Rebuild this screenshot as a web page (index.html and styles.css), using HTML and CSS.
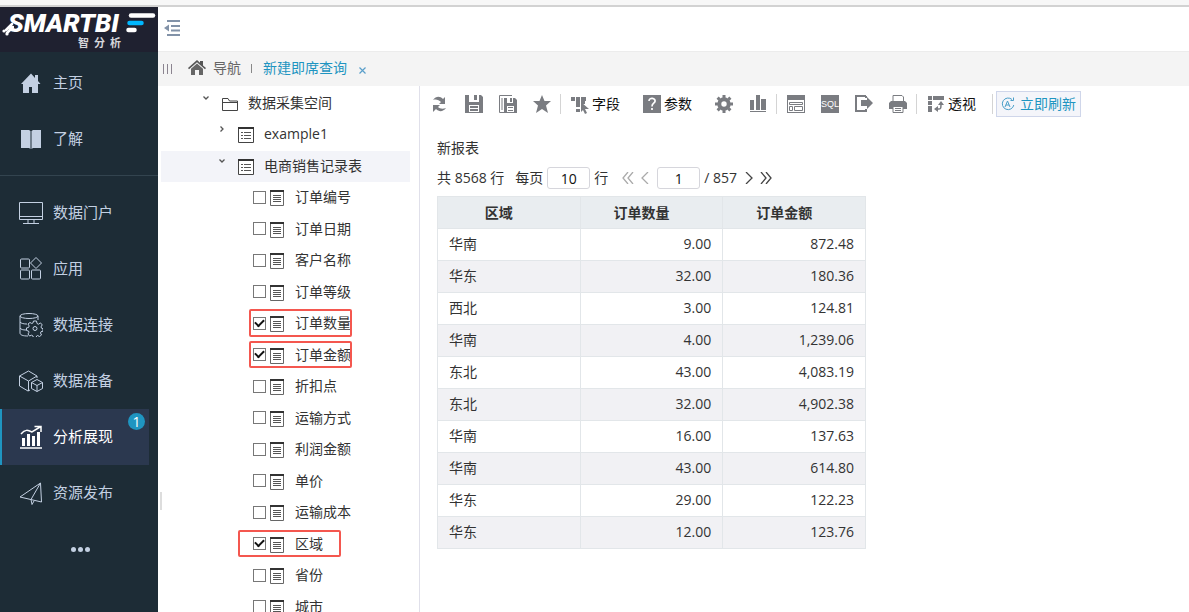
FILE: index.html
```
<!DOCTYPE html>
<html lang="zh-CN">
<head>
<meta charset="utf-8">
<title>新建即席查询</title>
<link rel="stylesheet" href="styles.css">
</head>
<body>
<svg class="defs" aria-hidden="true">
  <symbol id="table" viewBox="0 0 16 16"><path d="M.5 1h15v14.5H.5z" fill="#fff" stroke="#444"/><path d="M0 1h16" stroke="#333" stroke-width="2"/><path d="M3 5.5h2m1 0h7M3 8.500h2m1 0h7M3 11.500h2m1 0h7" stroke="#555"/></symbol>
  <symbol id="field" viewBox="0 0 14 16"><path d="M.5 1h13v14.500H.5z" fill="#fff" stroke="#666"/><path d="M0 1h14" stroke="#333" stroke-width="2"/><path d="M3 5.500h8M3 7.500h8M3 9.500h8M3 11.500h8" stroke="#555"/></symbol>
  <symbol id="down" viewBox="0 0 8 8"><path d="M1.500 2.500 4 5l2.500-2.500" fill="none" stroke="#555" stroke-width="1.300"/></symbol>
  <symbol id="right" viewBox="0 0 8 8"><path d="M2.500 1.500 5 4 2.500 6.500" fill="none" stroke="#555" stroke-width="1.300"/></symbol>
</svg>
<div class="strip"></div>
<div class="app">
  <aside class="sidebar">
    <div class="logo">
      <div class="logo-row">
        <svg class="logo-tail" viewBox="0 0 12 14"><path d="M10 2 4 8M11 5 5 11" stroke="#fff" stroke-width="2.500" stroke-linecap="round"/><circle cx="2" cy="9" r="1.600" fill="#fff"/><circle cx="5" cy="12" r="1.600" fill="#fff"/></svg>
        <span class="logo-name">SMARTBI</span>
        <svg class="logo-bars" viewBox="0 0 31 22"><g stroke-linecap="round" stroke-width="4.500"><path d="M6 3.500h22" stroke="#fff"/><path d="M4.500 11h12" stroke="#00b7ff"/><path d="M3.500 18h6" stroke="#fff"/></g></svg>
      </div>
      <div class="logo-sub"><span>智</span><span>分</span><span>析</span></div>
    </div>
    <nav>
      <div class="group first">
        <a class="item" href="#"><svg viewBox="0 0 24 24"><path d="M12 2.500 2 13h2v9h6v-6h3v6h6v-9h2.500L19 10V4h-3v3z" fill="#c3d0e2"/></svg>主页</a>
        <a class="item" href="#"><svg viewBox="0 0 24 24"><path d="M2 3h8l1.500 1v18L10 21H2zM22 3h-8l-1.500 1v18L14 21h8z" fill="#c3d0e2"/></svg>了解</a>
      </div>
      <div class="group">
        <a class="item" href="#"><svg viewBox="0 0 24 24"><path d="M.5 1.500h23v17H.5zM.5 15.500h23M9 19v3m6-3v3M4 22.500h16"/></svg>数据门户</a>
        <a class="item" href="#"><svg viewBox="0 0 24 24"><rect x="1.500" y="2" width="9" height="9" rx="1"/><rect x="1.500" y="13" width="9" height="9" rx="1"/><rect x="12.500" y="13" width="9" height="9" rx="1"/><path d="m17 .5 5.500 5.500-5.500 5.500L11.500 6z"/></svg>应用</a>
        <a class="item" href="#"><svg viewBox="0 0 24 24"><ellipse cx="10" cy="3" rx="9" ry="2.500"/><path d="M1 3v17C1 22 4 23 9 23M19 3v4M1 9c1 1.500 4 2 7 2M1 15c1 1.500 3 2 6 2"/><circle cx="16" cy="15.500" r="2"/><path d="m14.500 8h3l.5 2.500 1.500.7 2-1.300 1.700 2-1.200 2 .5 1.300 1.500.5v2.500l-2 .5-.5 1.300 1 2-2 1.500-2-1-.9.500-.6 2h-2.500l-.5-2-1.500-.8-2 .8-1.500-2 1-1.800-.5-1.200-2-.5v-2.600l2-.4.700-1.500-1.200-2 2-1.500 1.800 1 1.200-.6z"/></svg>数据连接</a>
        <a class="item" href="#"><svg viewBox="0 0 24 24"><path d="M11 21 9 22 .5 17V7L9.500 2 18 7v2M.5 7 9.500 12 18 7M9.500 12v10M18 10.500l5.500 3v6l-5.500 3-5.500-3v-6zM12.500 13.500l5.500 3 5.500-3M18 16.500v6"/></svg>数据准备</a>
        <a class="item active" href="#"><svg viewBox="0 0 24 24"><path d="M1 23h22" stroke-width="1.500"/><path d="M4.500 13v8M9.500 9v12M14.500 11v10M19.500 7v14" stroke-width="3"/><path d="M2 9c4-5 7-4 11-2l8-5M15.500 1.500H22V7" stroke-width="1.500"/></svg>分析展现<span class="badge">1</span></a>
        <a class="item" href="#"><svg viewBox="0 0 24 24"><path d="M1 16 21.500 2 22.500 21zM21.500 2 12 18.500 13 23.500 15 20"/></svg>资源发布</a>
        <a class="item more" href="#" aria-label="更多"><i></i><i></i><i></i></a>
      </div>
    </nav>
  </aside>
  <div class="main">
    <header class="top"><button class="plain" aria-label="收起菜单"><svg width="16" height="16" viewBox="0 0 16 16"><path d="M3 1h13M7 6h9M7 10.500h9M3 15h13" stroke="#8292a8" stroke-width="2"/><path d="M5 4.500v7L0 8z" fill="#8292a8"/></svg></button></header>
    <div class="tabs">
      <svg class="grip" viewBox="0 0 9 10"><path d="M.5 0v10M4.500 0v10M8.500 0v10" stroke="#8b8490"/></svg>
      <a class="home" href="#"><svg width="18" height="16" viewBox="0 0 18 16"><path d="M0 8 9 0l3 2.700V1h3v4.500L18 8l-1 1.200-8-7-8 7z" fill="#555"/><path d="m9 3.500 6 5.300V15h-4v-5H7v5H3V8.800z" fill="#666"/></svg>导航</a>
      <span class="bar"></span>
      <a class="current" href="#">新建即席查询</a>
      <button class="plain close" aria-label="关闭"><svg width="7" height="7" viewBox="0 0 7 7"><path d="m.5.5 6 6m0-6-6 6" stroke="#5a9fca" stroke-width="1.200"/></svg></button>
    </div>
    <div class="body">
      <div class="splitter"></div>
      <ul class="tree">
        <li class="l0"><svg class="arrow"><use href="#down"/></svg><svg class="ico" viewBox="0 0 16 16"><path d="M.5 14V2.500H6L7.500 5h8v9.500H.5zM.5 6.500h15" fill="none" stroke="#444"/></svg><span>数据采集空间</span></li>
        <li class="l1"><svg class="arrow"><use href="#right"/></svg><svg class="ico"><use href="#table"/></svg><span>example1</span></li>
        <li class="l1 selected"><svg class="arrow"><use href="#down"/></svg><svg class="ico"><use href="#table"/></svg><span>电商销售记录表</span></li>
        <li class="l2"><label><input type="checkbox"><svg><use href="#field"/></svg>订单编号</label></li>
        <li class="l2"><label><input type="checkbox"><svg><use href="#field"/></svg>订单日期</label></li>
        <li class="l2"><label><input type="checkbox"><svg><use href="#field"/></svg>客户名称</label></li>
        <li class="l2"><label><input type="checkbox"><svg><use href="#field"/></svg>订单等级</label></li>
        <li class="l2 mark"><label><input type="checkbox" checked><svg><use href="#field"/></svg>订单数量</label></li>
        <li class="l2 mark"><label><input type="checkbox" checked><svg><use href="#field"/></svg>订单金额</label></li>
        <li class="l2"><label><input type="checkbox"><svg><use href="#field"/></svg>折扣点</label></li>
        <li class="l2"><label><input type="checkbox"><svg><use href="#field"/></svg>运输方式</label></li>
        <li class="l2"><label><input type="checkbox"><svg><use href="#field"/></svg>利润金额</label></li>
        <li class="l2"><label><input type="checkbox"><svg><use href="#field"/></svg>单价</label></li>
        <li class="l2"><label><input type="checkbox"><svg><use href="#field"/></svg>运输成本</label></li>
        <li class="l2 mark wide"><label><input type="checkbox" checked><svg><use href="#field"/></svg>区域</label></li>
        <li class="l2"><label><input type="checkbox"><svg><use href="#field"/></svg>省份</label></li>
        <li class="l2"><label><input type="checkbox"><svg><use href="#field"/></svg>城市</label></li>
      </ul>
      <main class="content">
        <div class="toolbar">
          <div class="tools">
            <button class="plain" aria-label="刷新"><svg viewBox="0 0 18 18"><path d="M2 5c3-4 7-4 10-1l2-2v7H8l2-2C8 5 5 4 2 5zM15 13c-3 4-7 4-10 1l-3 3v-7h7l-2 2c2 2 5 2 8 1z"/></svg></button>
            <button class="plain" aria-label="保存"><svg viewBox="0 0 18 18"><path fill-rule="evenodd" d="M0 0h4v7h10V0h2l2 2v16H0zM9 0h3v5H9zM4 10v7h10v-7z"/><path d="M5 11h8v2H5zm0 3h8v2H5z"/></svg></button>
            <button class="plain" aria-label="另存为"><svg viewBox="0 0 18 18"><path d="M13 .5H.5v17H5M3 3v12" fill="none" stroke="#7a7c81"/><path fill-rule="evenodd" d="M5 3h3v5h6V3h2l2 2v13H5zM11 3h2v4h-2zM8 11v6h7v-6z"/><path d="M9 12h5v1H9zm0 3h5v1H9z"/></svg></button>
            <button class="plain" aria-label="收藏"><svg viewBox="0 0 18 18"><path d="m9 0 2.500 6H18l-5 4.500L15 18l-6-4-6 4 2-7.500L0 6h6.500z"/></svg></button>
          </div>
          <span class="sep"></span>
          <div class="tools text-tools">
            <button class="plain"><svg viewBox="0 0 18 18"><path d="M0 2h4v4H0zM5 2h4v10H5zM10 2h5v4h-1v3h-4zM5 14h4v3H5zM10 7l8 7h-4l2 4-2 1-2-4-2 2z"/></svg>字段</button>
            <button class="plain"><svg viewBox="0 0 18 18"><path d="M0 0h18v18H0z"/><path d="M6 6c0-4 7-3 6 .5C11.500 8.500 9 8 9 11.500M9 13v2" fill="none" stroke="#fff" stroke-width="1.700"/></svg>参数</button>
          </div>
          <div class="tools">
            <button class="plain" aria-label="设置"><svg viewBox="0 0 18 18"><circle cx="9" cy="9" r="4.700" fill="none" stroke="#7a7c81" stroke-width="4"/><path d="M9 0v3M9 15v3M0 9h3M15 9h3M2.600 2.600l2 2M13.400 13.400l2 2M2.600 15.400l2-2M13.400 4.600l2-2" stroke="#7a7c81" stroke-width="3"/></svg></button>
            <button class="plain" aria-label="图表"><svg viewBox="0 0 18 18"><path d="M1 5h4v10H1zM7 0h4v15H7zM12 4h5v11h-5zM1 16h16v1H1z"/></svg></button>
          </div>
          <span class="sep"></span>
          <div class="tools">
            <button class="plain" aria-label="布局"><svg viewBox="0 0 18 18"><path fill-rule="evenodd" d="M0 0h18v18H0zM1 5v12h16V5z"/><path d="M2.500 7.500h13v2h-13zM2.500 11.500h3v4h-3zM7.500 11.500h8v4h-8z" fill="none" stroke="#7a7c81"/></svg></button>
            <button class="plain sql">SQL</button>
            <button class="plain" aria-label="导出"><svg viewBox="0 0 18 18"><path d="M11 1H1v15h10v-2M11 1v2" fill="none" stroke="#7a7c81" stroke-width="2"/><path d="M6 5h6V2l6 6-6 6v-3H6z"/></svg></button>
            <button class="plain" aria-label="打印"><svg viewBox="0 0 18 18"><path d="M4 6V.500h9L14.500 2v4" fill="#fff" stroke="#7a7c81"/><path d="M2 6h14l2 2v6H0V8z"/><path d="M4 11.500h10v6H4zM6 13.500h6M6 15.500h6" fill="#fff" stroke="#7a7c81"/></svg></button>
          </div>
          <span class="sep"></span>
          <div class="tools"><button class="plain"><svg viewBox="0 0 18 18"><path d="M1 1h4v4H1zM6 1h11v4H6zM1 6h4v4H1zM1 11h4v6H1z"/><path d="M9 14h3c2 0 2-1 2-6" fill="none" stroke="#7a7c81" stroke-width="1.500"/><path d="m14 6 3 4h-6zM7 14l4-3v6z"/></svg>透视</button></div>
          <span class="sep last"></span>
          <button class="refresh"><svg width="14" height="14" viewBox="0 0 14 14" fill="none" stroke="#4a9fc9"><path d="M11 2.500A5.800 5.800 0 1 0 12.800 8M9.500 3.500h3V.5"/><path d="m4 10 2.500-6L9 10M5 8h3"/></svg>立即刷新</button>
        </div>
        <section class="report">
          <h1>新报表</h1>
          <div class="pager">
            <span>共 8568 行</span>
            <label>每页<input type="text" value="10">行</label>
            <span class="steps">
              <button class="plain muted" aria-label="首页"><svg width="12" height="12" viewBox="0 0 12 12"><path d="M6 0 1 6l5 6M11 0 6 6l5 6"/></svg></button>
              <button class="plain muted" aria-label="上一页"><svg width="8" height="12" viewBox="0 0 8 12"><path d="M7 0 1 6l6 6"/></svg></button>
            </span>
            <input type="text" value="1" aria-label="页码">
            <span class="total">/ 857</span>
            <span class="steps next">
              <button class="plain" aria-label="下一页"><svg width="8" height="12" viewBox="0 0 8 12"><path d="m1 0 6 6-6 6"/></svg></button>
              <button class="plain" aria-label="末页"><svg width="12" height="12" viewBox="0 0 12 12"><path d="m1 0 5 6-5 6M6 0l5 6-5 6"/></svg></button>
            </span>
          </div>
          <table>
            <thead><tr><th>区域</th><th>订单数量</th><th>订单金额</th></tr></thead>
            <tbody>
              <tr><td>华南</td><td>9.00</td><td>872.48</td></tr>
              <tr><td>华东</td><td>32.00</td><td>180.36</td></tr>
              <tr><td>西北</td><td>3.00</td><td>124.81</td></tr>
              <tr><td>华南</td><td>4.00</td><td>1,239.06</td></tr>
              <tr><td>东北</td><td>43.00</td><td>4,083.19</td></tr>
              <tr><td>东北</td><td>32.00</td><td>4,902.38</td></tr>
              <tr><td>华南</td><td>16.00</td><td>137.63</td></tr>
              <tr><td>华南</td><td>43.00</td><td>614.80</td></tr>
              <tr><td>华东</td><td>29.00</td><td>122.23</td></tr>
              <tr><td>华东</td><td>12.00</td><td>123.76</td></tr>
            </tbody>
          </table>
        </section>
      </main>
    </div>
  </div>
</div>
</body>
</html>
```
FILE: styles.css
```
*, ::before, ::after { box-sizing: border-box; }
body {
  margin: 0;
  height: 100vh;
  overflow: hidden;
  display: flex;
  flex-direction: column;
  background: #fff;
  color: #333;
  font: 14px/20px "Open Sans", "Noto Sans CJK SC", sans-serif;
}
a { color: inherit; text-decoration: none; }
svg { flex: none; }
.defs { position: absolute; width: 0; height: 0; }
.plain { display: flex; align-items: center; padding: 0; border: 0; background: none; color: inherit; font: inherit; }
.strip { flex: none; height: 7px; background: #f7f7f7; border-bottom: 2px solid #d2d2d2; }
.app { flex: 1; min-height: 0; display: flex; }

.sidebar { flex: none; width: 158px; background: #1d2c36; overflow: hidden; }
.logo { height: 45px; padding: 5px 2px 0 2px; background: #1f2130; color: #fff; }
.logo-row { display: flex; height: 22px; }
.logo-tail { width: 12px; height: 14px; margin: 10px -6px 0 0; }
.logo-name { flex: 1; font: italic 900 26px/22px Roboto, sans-serif; }
.logo-bars { width: 31px; height: 22px; }
.logo-sub { display: flex; gap: 5px; padding-left: 76px; font: 700 11px/16px "Noto Sans CJK SC", sans-serif; color: #d5d5da; }
.group { padding-top: 9px; }
.group.first { padding: 3px 0 8px; border-bottom: 1px solid #33444f; }
.item { position: relative; display: flex; align-items: center; gap: 10px; height: 56px; margin-right: 9px; padding: 0 0 2px 19px; color: #c3d0e2; font-size: 15px; }
.item svg { width: 24px; height: 24px; margin-top: 2px; fill: none; stroke: #c3d0e2; stroke-width: 1; }
.first svg { stroke: none; }
.item.active { border-left: 2px solid #1f95c1; padding-left: 17px; background: #2b384f; color: #fff; }
.item.active svg { stroke: #fff; }
.badge { position: absolute; top: 4px; right: 4px; width: 17px; height: 17px; border-radius: 50%; background: #1f95c1; font-size: 14px; line-height: 17px; text-align: center; }
.item.more { gap: 2px; padding: 0 0 0 71px; }
.more i { width: 5px; height: 5px; border-radius: 50%; background: #c3d0e2; }

.main { flex: 1; min-width: 0; display: flex; flex-direction: column; }
.top { flex: none; height: 44px; display: flex; align-items: center; padding: 0 0 2px 6px; }
.tabs { flex: none; height: 35px; display: flex; align-items: center; padding: 0 0 2px 5px; background: #f4f4f4; border-top: 1px solid #ececec; color: #666; }
.grip { width: 9px; height: 10px; margin-top: 2px; }
.home { display: flex; align-items: center; gap: 7px; margin-left: 16px; }
.bar { width: 1px; height: 9px; margin: 0 11px 0 10px; background: #888; }
.current { color: #1f95c1; }
.close { margin-left: 12px; padding-top: 4px; }

.body { flex: 1; min-height: 0; display: flex; }
.splitter { flex: none; align-self: center; width: 2px; height: 18px; margin: 304px 0 0 2px; background: #ddd; }
.tree { flex: none; width: 259px; margin: 0 0 0 -1px; padding: 2px 9px 0 0; list-style: none; border-right: 1px solid #e0e0ea; overflow: hidden; }
.tree li { position: relative; display: flex; align-items: center; height: 31px; padding-bottom: 2px; }
.tree li:nth-child(even) { height: 32px; }
.tree .selected { background: #f3f4f9; }
.l0 { padding-left: 41px; }
.l1 { padding-left: 57px; }
.arrow { width: 8px; height: 8px; margin-bottom: 10px; }
.ico { width: 16px; height: 16px; margin: 2px 10px 0 12px; }
.l2 label { display: flex; align-items: center; padding-left: 92px; }
.l2 label svg { width: 14px; height: 16px; margin: 2px 11px 0 4px; }
.l2 input { appearance: none; width: 13px; height: 13px; margin: 0; border: 1px solid #777; background: #fff; }
.l2 input:checked::after { content: ""; display: block; width: 9px; height: 6px; margin: 1px 0 0 1px; border: solid #111; border-width: 0 0 2px 2px; transform: rotate(-45deg); }
.mark::after { content: ""; position: absolute; left: 88px; top: 1px; width: 103px; bottom: 3px; border: 2px solid #f4574f; border-radius: 2px; }
.mark.wide::after { left: 77px; }

.content { flex: 1; min-width: 0; }
.toolbar { display: flex; align-items: center; height: 36px; padding: 0 0 0 11px; color: #111; }
.tools { display: flex; gap: 16px; }
.tools svg { width: 18px; height: 18px; fill: #7a7c81; overflow: visible; }
.tools .plain { gap: 3px; }
.text-tools { gap: 23px; margin-right: 23px; }
.sep { width: 1px; height: 20px; margin: 0 10px 0 9px; background: #d4d4d4; }
.sep.last { margin: 0 3px 0 16px; }
.tools .sql { width: 18px; height: 18px; justify-content: center; background: #7a7c81; color: #fff; font: 9px/18px "Liberation Sans", sans-serif; }
.refresh { display: flex; align-items: center; gap: 5px; height: 26px; padding: 0 4px; border: 1px solid #cfd6ea; background: #f4f5fa; color: #1f95c1; font: inherit; }
.report { padding: 16px 17px; }
h1 { margin: 0 0 9px; font-size: 14px; font-weight: 400; line-height: 20px; }
.pager { display: flex; align-items: center; height: 22px; margin-bottom: 7px; }
.pager label { display: flex; align-items: center; gap: 4px; margin-left: 11px; }
.pager input { width: 43px; height: 22px; padding: 0; border: 1px solid #d6d6dc; border-radius: 3px; color: #111; font: inherit; text-align: center; }
.steps { display: flex; gap: 7px; margin: 0 8px 0 14px; }
.steps svg { fill: none; stroke: #444; stroke-width: 1.300; }
.steps .muted svg { stroke: #aaa; }
.steps.next { margin-left: 8px; }
.total { margin-left: 4px; }
table { width: 429px; max-width: 100%; table-layout: fixed; border-collapse: collapse; }
th, td { height: 32px; padding: 0 11px 2px; border: 1px solid #e2e6e9; text-align: right; }
th { padding: 0 31px 0 11px; background: #e9edf0; text-align: center; }
td:first-child { text-align: left; }
tbody tr:nth-child(even) { background: #f1f1f4; }
```
